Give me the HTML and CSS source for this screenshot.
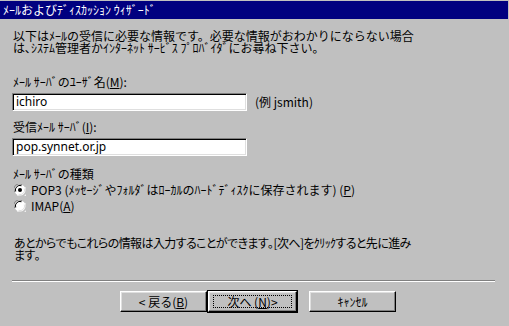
FILE: index.html
```html
<!DOCTYPE html>
<html lang="ja">
<head>
<meta charset="utf-8">
<link rel="stylesheet" href="styles.css">
</head>
<body>
<div class="window">
  <div class="titlebar">ﾒｰﾙおよびﾃﾞｨｽｶｯｼｮﾝ ｳｨｻﾞｰﾄﾞ</div>
  <div class="content">
    <p class="intro">以下はﾒｰﾙの受信に必要な情報です。必要な情報がおわかりにならない場合<br>は､ｼｽﾃﾑ管理者かｲﾝﾀｰﾈｯﾄ ｻｰﾋﾞｽ ﾌﾟﾛﾊﾞｲﾀﾞにお尋ね下さい｡</p>

    <div class="label label-user">ﾒｰﾙ ｻｰﾊﾞのﾕｰｻﾞ名(<u>M</u>):</div>
    <div class="field-row">
      <div class="textbox">ichiro</div>
      <span class="example">(例 jsmith)</span>
    </div>

    <div class="label label-server">受信ﾒｰﾙ ｻｰﾊﾞ(<u>I</u>):</div>
    <div class="field-row">
      <div class="textbox">pop.synnet.or.jp</div>
    </div>

    <div class="label label-type">ﾒｰﾙ ｻｰﾊﾞの種類</div>
    <div class="radio-row radio-first">
      <svg class="radio" width="12" height="12" viewBox="0 0 12 12">
        <circle cx="6" cy="6" r="5.5" fill="#fff"/>
        <path d="M0.5 8 A5.5 5.5 0 0 1 8 0.5" stroke="#808080" fill="none"/>
        <path d="M1.7 7.5 A4.5 4.5 0 0 1 7.5 1.7" stroke="#000" fill="none"/>
        <path d="M3.5 11.5 A5.5 5.5 0 0 0 11.5 3.5" stroke="#fff" fill="none"/>
        <path d="M4.5 10.3 A4.5 4.5 0 0 0 10.3 4.5" stroke="#dfdfdf" fill="none"/>
        <circle cx="6" cy="6" r="2" fill="#000"/>
      </svg>
      <span>POP3 (ﾒｯｾｰｼﾞやﾌｫﾙﾀﾞはﾛｰｶﾙのﾊｰﾄﾞﾃﾞｨｽｸに保存されます) (<u>P</u>)</span>
    </div>
    <div class="radio-row">
      <svg class="radio" width="12" height="12" viewBox="0 0 12 12">
        <circle cx="6" cy="6" r="5.5" fill="#fff"/>
        <path d="M0.5 8 A5.5 5.5 0 0 1 8 0.5" stroke="#808080" fill="none"/>
        <path d="M1.7 7.5 A4.5 4.5 0 0 1 7.5 1.7" stroke="#000" fill="none"/>
        <path d="M3.5 11.5 A5.5 5.5 0 0 0 11.5 3.5" stroke="#fff" fill="none"/>
        <path d="M4.5 10.3 A4.5 4.5 0 0 0 10.3 4.5" stroke="#dfdfdf" fill="none"/>
      </svg>
      <span>IMAP(<u>A</u>)</span>
    </div>

    <p class="note">あとからでもこれらの情報は入力することができます｡[次へ]をｸﾘｯｸすると先に進み<br>ます｡</p>
  </div>
  <div class="separator"></div>
  <div class="buttons">
    <div class="btn">&lt; 戻る(<u>B</u>)</div>
    <div class="btn btn-default"><span class="focus">次へ (<u>N</u>)&gt;</span></div>
    <div class="btn btn-cancel">ｷｬﾝｾﾙ</div>
  </div>
</div>
</body>
</html>
```
FILE: styles.css
```css
html, body {
  margin: 0;
  padding: 0;
  background: #c0c0c0;
}
body {
  font-family: "Noto Sans CJK JP", "Noto Sans", sans-serif;
  font-size: 12px;
  line-height: 12px;
  color: #000;
  width: 509px;
  height: 326px;
  overflow: hidden;
}
.window {
  padding-top: 1px;
}
.titlebar {
  height: 18px;
  line-height: 18px;
  background: #000080;
  color: #fff;
  padding-left: 3px;
  margin-right: 1px;
}
.content {
  padding-left: 13px;
}
.intro {
  margin: 11px 0 0 0;
}
.label-user {
  margin-top: 22px;
}
.label-server {
  margin-top: 10px;
}
.label-type {
  margin-top: 12px;
}
.field-row {
  display: flex;
  align-items: center;
  margin-top: 5px;
  margin-left: -1px;
}
.textbox {
  box-sizing: border-box;
  width: 235px;
  height: 18px;
  background: #fff;
  border-top: 1px solid #808080;
  border-left: 1px solid #808080;
  border-right: 1px solid #fff;
  border-bottom: 1px solid #fff;
  box-shadow: inset 1px 1px 0 #000, inset -1px -1px 0 #dfdfdf;
  padding: 0 3px;
  line-height: 16px;
  font-family: "Noto Sans", "Noto Sans CJK JP", sans-serif;
  font-size: 12px;
}
.example {
  margin-left: 8px;
}
.radio-row {
  display: flex;
  align-items: center;
  height: 12px;
  margin-top: 4px;
  margin-left: 1px;
}
.radio-first {
  margin-top: 4px;
}
.radio {
  flex: none;
  margin-right: 5px;
}
.note {
  margin: 25px 0 0 1px;
  font-feature-settings: "palt";
  letter-spacing: -0.6px;
}
.separator {
  margin: 19px 14px 0 12px;
  height: 1px;
  background: #808080;
  border-bottom: 1px solid #fff;
}
.buttons {
  display: flex;
  margin-top: 9px;
  padding-left: 120px;
}
.btn {
  box-sizing: border-box;
  width: 87px;
  height: 21px;
  display: flex;
  align-items: center;
  justify-content: center;
  background: #c0c0c0;
  border-top: 1px solid #fff;
  border-left: 1px solid #fff;
  border-right: 1px solid #000;
  border-bottom: 1px solid #000;
  box-shadow: inset -1px -1px 0 #808080, inset 1px 1px 0 #dfdfdf;
}
.btn-default {
  width: 89px;
  outline: 1px solid #000;
  margin-left: 1px;
}
.focus {
  display: flex;
  align-items: center;
  justify-content: center;
  box-sizing: border-box;
  width: 79px;
  height: 13px;
  border: 1px dotted #000;
}
.btn-cancel {
  margin-left: 12px;
}
u {
  text-decoration: underline;
  text-underline-offset: 1px;
}
```
